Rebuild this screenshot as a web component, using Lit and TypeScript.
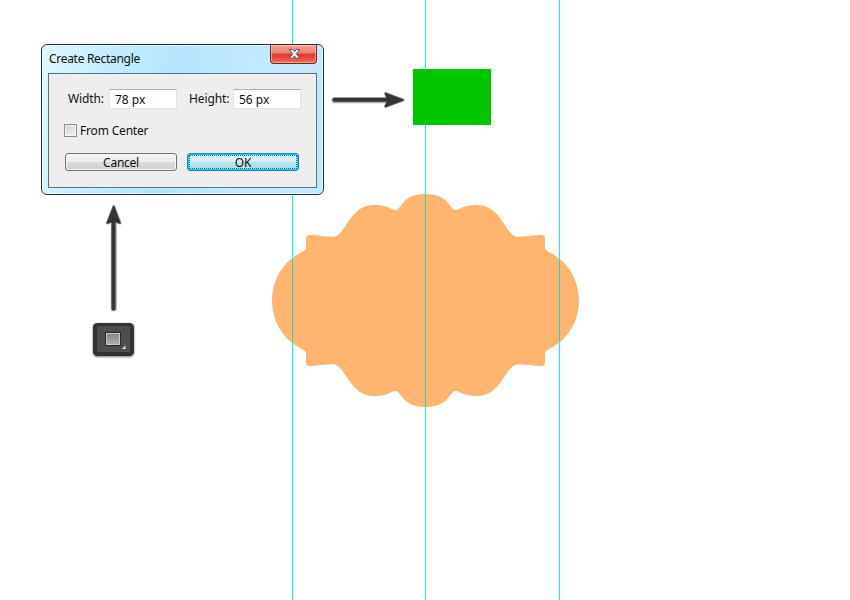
import { LitElement, html, css, svg } from "lit";
import { customElement } from "lit/decorators.js";

const QUARTER =
  "M425.5 301H272C272 281 282 262 301 252.500C305 250.300 306 249.500 306 246.500V239C306 236.200 307.200 235 310 235C318 235.200 326 237 333 236.800C346 236 349 205 374 205C389 205 391 210 395.500 210C402 210 401 194 425.500 194Z";

@customElement("create-rectangle-dialog")
class CreateRectangleDialog extends LitElement {
  static styles = css`
    :host {
      display: block;
      box-sizing: border-box;
      width: 283px;
      height: 151px;
      border: 1px solid #26323b;
      border-radius: 6px;
      padding: 0 6px 6px;
      background: linear-gradient(100deg, #e2f7ff 0%, #c5eeff 20%, #b5e5ff 45%, #c3ebff 75%, #c1e8fb 100%);
      box-shadow: inset 0 0 0 1px rgba(255, 255, 255, 0.55);
      font: 12px/16px "Noto Sans", "Open Sans", sans-serif;
      color: #101010;
    }
    .title {
      display: flex;
      justify-content: space-between;
      height: 28px;
      padding-left: 1px;
    }
    .title span {
      padding-top: 6px;
      letter-spacing: -0.3px;
    }
    .close {
      box-sizing: border-box;
      width: 47px;
      height: 19px;
      border: 1px solid #6c2929;
      border-top: 0;
      border-radius: 0 0 4px 4px;
      background: linear-gradient(#f5a397 0, #f07c6e 45%, #e0382c 50%, #f46a58 100%);
      box-shadow: inset 0 0 0 1px rgba(255, 210, 195, 0.55);
    }
    .close svg {
      display: block;
      margin: 3px auto 0 17px;
    }
    .panel {
      box-sizing: border-box;
      height: 115px;
      border: 1px solid #60717c;
      background: #eee;
      padding: 15px 14px 0 15px;
    }
    .fields {
      display: flex;
      height: 20px;
      align-items: center;
      padding-left: 4px;
    }
    .fields label {
      flex: none;
      letter-spacing: -0.12px;
    }
    .fields .w {
      width: 41px;
    }
    .fields .h {
      width: 44px;
      margin-left: 12px;
    }
    .input {
      flex: none;
      box-sizing: border-box;
      width: 68px;
      height: 20px;
      border: 1px solid #e2e3ea;
      border-top-color: #abadb3;
      background: #fff;
      padding: 2px 0 0 5px;
      letter-spacing: 0;
    }
    .check {
      display: flex;
      align-items: center;
      margin-top: 13px;
      height: 16px;
      gap: 3px;
      letter-spacing: -0.18px;
    }
    .check span {
      padding-top: 2px;
    }
    .box {
      box-sizing: border-box;
      width: 13px;
      height: 13px;
      border: 1px solid #8e8f8f;
      background: linear-gradient(135deg, #cfd2d5, #f4f4f4);
      box-shadow: inset 0 0 0 1px #f4f4f4;
    }
    .buttons {
      display: flex;
      gap: 10px;
      margin: 15px 0 0 1px;
    }
    .btn {
      flex: none;
      box-sizing: border-box;
      width: 112px;
      height: 18px;
      border: 1px solid #707070;
      border-radius: 3px;
      background: linear-gradient(#f2f2f2 0, #ebebeb 48%, #dcdcdc 52%, #cfcfcf 100%);
      box-shadow: inset 0 0 0 1px #f8f8f8;
      text-align: center;
      letter-spacing: -0.25px;
      line-height: 17px;
    }
    .ok {
      position: relative;
      border-color: #1687b0;
      background: linear-gradient(#e4f4fa 0, #d3eef7 48%, #b9e3ef 52%, #a5dcea 100%);
      box-shadow: inset 0 0 0 1px #12c8f2;
    }
    .ok::after {
      content: "";
      position: absolute;
      inset: 1px;
      border: 1px dotted #2b6a7c;
    }
  `;

  render() {
    return html`
      <div class="title">
        <span>Create Rectangle</span>
        <div class="close">
          <svg width="13" height="12" viewBox="0 0 13 12">
            <path
              d="M1.500 1.500H4.700L6.500 3.600L8.300 1.500H11.500L8.400 5.800L11.500 10.200H8.300L6.500 8L4.700 10.200H1.500L4.600 5.800Z"
              fill="#fff" stroke="#5c5660" stroke-width="1" />
          </svg>
        </div>
      </div>
      <div class="panel">
        <div class="fields">
          <label class="w">Width:</label>
          <div class="input">78 px</div>
          <label class="h">Height:</label>
          <div class="input">56 px</div>
        </div>
        <div class="check"><i class="box"></i><span>From Center</span></div>
        <div class="buttons">
          <div class="btn">Cancel</div>
          <div class="btn ok">OK</div>
        </div>
      </div>
    `;
  }
}

@customElement("app-root")
class AppRoot extends LitElement {
  static styles = css`
    :host {
      display: block;
      position: relative;
      width: 850px;
      height: 600px;
      background: #fff;
      overflow: hidden;
    }
    .canvas {
      display: block;
    }
    .dialog {
      position: absolute;
      left: 41px;
      top: 44px;
    }
  `;

  render() {
    return html`
      <svg class="canvas" width="850" height="600" viewBox="0 0 850 600">
        <defs>
          <linearGradient id="tool" x2="0" y2="1">
            <stop offset="0" stop-color="#858585" />
            <stop offset="1" stop-color="#b0b0b0" />
          </linearGradient>
          <filter id="shadow" x="-20%" y="-20%" width="140%" height="150%">
            <feDropShadow dx="0" dy="1" stdDeviation="0.8" flood-opacity="0.55" />
          </filter>
          <path id="quarter" d=${QUARTER} />
        </defs>
        <g fill="#ffb570">
          <use href="#quarter" />
          <use href="#quarter" transform="matrix(-1 0 0 1 851 0)" />
          <use href="#quarter" transform="matrix(1 0 0 -1 0 601)" />
          <use href="#quarter" transform="matrix(-1 0 0 -1 851 601)" />
        </g>
        ${[292, 425, 559].map(
          (x) => svg`
            <rect x=${x} y="0" width="1" height="600" fill="#00fbff" />`
        )}
        <rect x="292" y="259" width="1" height="83" fill="#2fd2b3" />
        <rect x="425" y="194" width="1" height="213" fill="#2fd2b3" />
        <rect x="559" y="260" width="1" height="81" fill="#2fd2b3" />
        <rect x="413" y="69" width="78" height="56" fill="#00c600" />
        <g stroke-linecap="round" stroke-linejoin="round">
          <path d="M334.500 100.300H388" stroke="#aaa" stroke-width="6" />
          <path d="M385.500 93.500L403 100L385.500 106.500L388 100Z" fill="#333" stroke="#aaa" stroke-width="3" />
          <path d="M334.500 99.800H390" stroke="#353537" stroke-width="4" />
          <path d="M385.500 93.500L403 100L385.500 106.500L388 100Z" fill="#353537" stroke="#353537" stroke-width="1.500" />
          <path d="M113.800 308.500V222" stroke="#aaa" stroke-width="6" />
          <path d="M107.300 223L113.700 206.500L120 223L113.700 220.500Z" fill="#333" stroke="#aaa" stroke-width="3" />
          <path d="M113.500 308.500V218" stroke="#353537" stroke-width="4" />
          <path d="M107.300 223L113.700 206.500L120 223L113.700 220.500Z" fill="#353537" stroke="#353537" stroke-width="1.500" />
        </g>
        <g filter="url(#shadow)">
          <rect x="93" y="323" width="41" height="33" rx="4.500" fill="#303030" />
        </g>
        <rect x="97" y="326" width="33" height="26" fill="#4d4d4d" />
        <rect x="105.500" y="332.500" width="15" height="13" fill="#292929" stroke="#292929" />
        <rect x="106.500" y="333.500" width="13" height="11" fill="url(#tool)" stroke="#c8c8c8" />
        <path d="M125.500 345.500V349H122Z" fill="#eee" />
      </svg>
      <create-rectangle-dialog class="dialog"></create-rectangle-dialog>
    `;
  }
}
